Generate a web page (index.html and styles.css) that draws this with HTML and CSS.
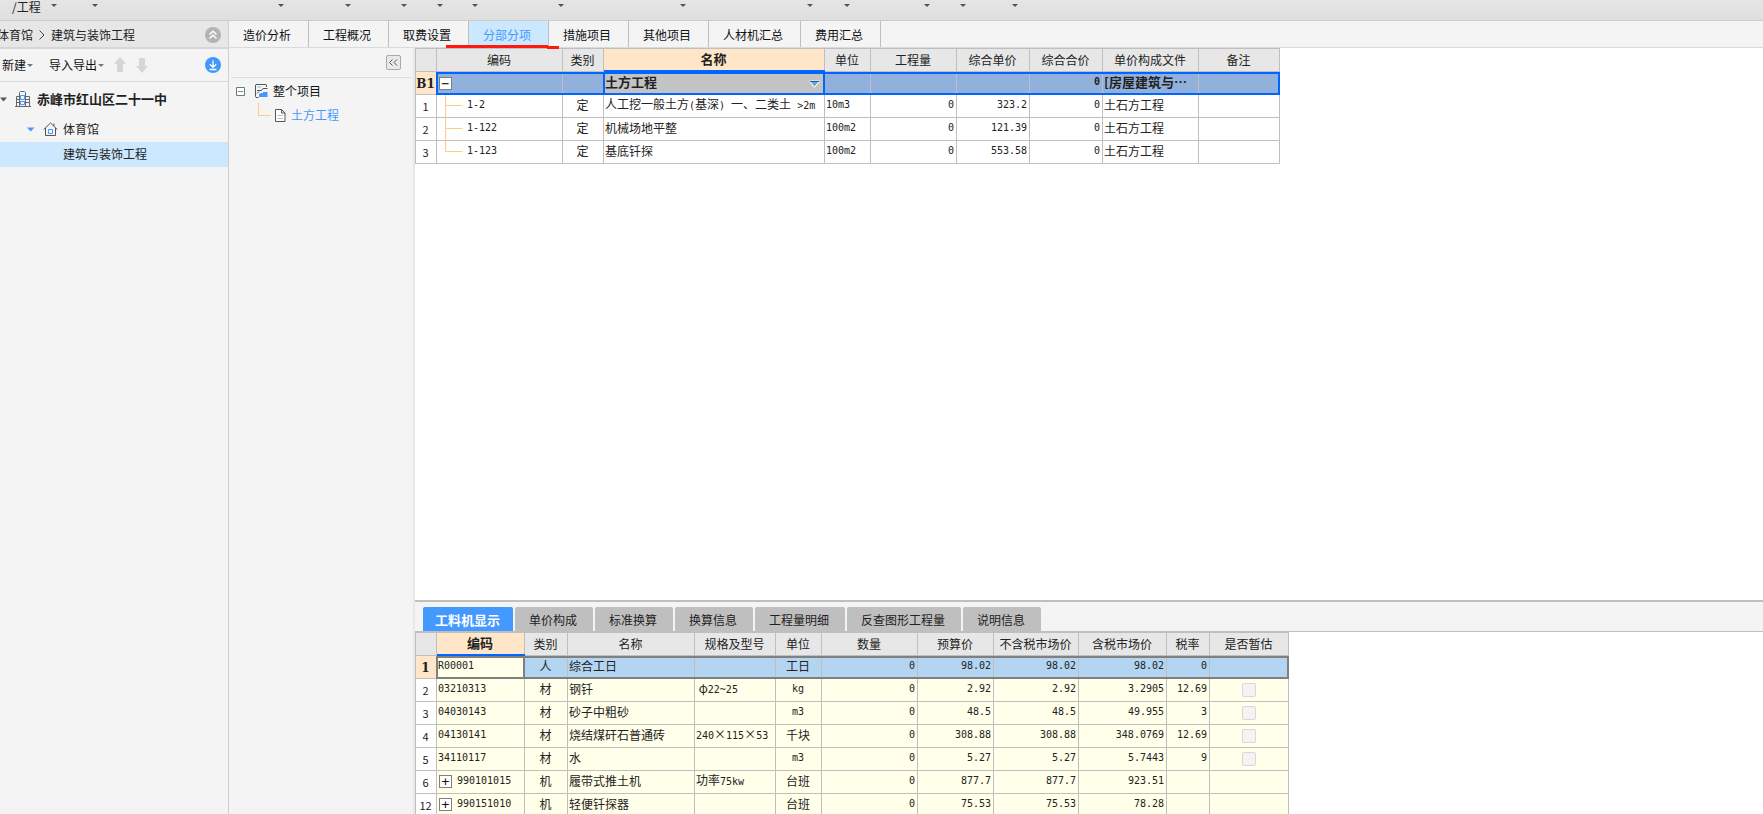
FILE: index.html
```html
<!DOCTYPE html>
<html lang="zh-CN">
<head>
<meta charset="utf-8">
<title>建筑与装饰工程</title>
<link rel="stylesheet" href="styles.css">
</head>
<body>
<header class="ribbon">
  <span class="ribbon-label">/工程</span>
  <i class="caret" style="left:51px"></i><i class="caret" style="left:92px"></i><i class="caret" style="left:278px"></i><i class="caret" style="left:345px"></i><i class="caret" style="left:401px"></i><i class="caret" style="left:437px"></i><i class="caret" style="left:472px"></i><i class="caret" style="left:558px"></i><i class="caret" style="left:680px"></i><i class="caret" style="left:807px"></i><i class="caret" style="left:844px"></i><i class="caret" style="left:924px"></i><i class="caret" style="left:960px"></i><i class="caret" style="left:1012px"></i>
</header>
<div class="app">
  <aside class="sidebar">
    <div class="crumbs">
      <span>体育馆</span>
      <svg width="6" height="10" viewBox="0 0 6 10"><path d="M0.500 0.500L5 5L0.500 9.500" fill="none" stroke="#444"/></svg>
      <span>建筑与装饰工程</span>
      <button class="round push" aria-label="收起"><svg width="16" height="16" viewBox="0 0 16 16"><circle cx="8" cy="8" r="8" fill="#b3b3b3"/><path d="M4.5 7.5L8 4.2L11.5 7.5M4.5 11.5L8 8.2L11.5 11.5" fill="none" stroke="#fff" stroke-width="1.4"/></svg></button>
    </div>
    <div class="toolbar">
      <button class="tool">新建<i class="caret-s"></i></button>
      <button class="tool export">导入导出<i class="caret-s"></i></button>
      <button class="arrow" aria-label="上移"><svg width="12" height="16" viewBox="0 0 12 16"><path d="M6 0L12 7H9V15H3V7H0Z" fill="#d6d6d6"/></svg></button>
      <button class="arrow" aria-label="下移"><svg width="12" height="16" viewBox="0 0 12 16"><path d="M6 16L12 9H9V1H3V9H0Z" fill="#d6d6d6"/></svg></button>
      <button class="round push" aria-label="下载"><svg width="16" height="16" viewBox="0 0 16 16"><circle cx="8" cy="8" r="8" fill="#4298fb"/><path d="M8 3.5V10M4.8 7.2L8 10.3L11.2 7.2M4.5 12.5H11.5" fill="none" stroke="#fff" stroke-width="1.3"/></svg></button>
    </div>
    <ul class="tree">
      <li class="root"><svg width="8" height="5" viewBox="0 0 8 5"><path d="M0 0.5H7L3.5 4.5Z" fill="#555"/></svg>
        <svg class="building" width="16" height="16" viewBox="0 0 16 16"><path d="M0 15.5H16M4.5 15V1.5L5.5 0.5H9.5L10.5 1.5V15M4.5 5.5H1.5V15M10.5 5.5H14.5V15M2 8.5H4M2 11.5H4M11 8.5H14M11 11.5H14" fill="none" stroke="#666"/><path d="M5.500 4.500H9.500V8.500H5.500ZM5.500 10.500H9.500V13.500H5.500Z" fill="none" stroke="#4499ff"/></svg>
        <span>赤峰市红山区二十一中</span></li>
      <li class="house"><svg width="8" height="5" viewBox="0 0 8 5"><path d="M0 0.5H7.5L3.7 4.5Z" fill="#4499ff"/></svg>
        <svg class="home" width="15" height="14" viewBox="0 0 15 14"><path d="M0.7 7.5L7.5 1L14.3 7.5M2.5 6V13.5H12.500V6M11 4V1.5" fill="none" stroke="#555"/><path d="M5.500 7.500H9.500V11.500H5.500Z" fill="none" stroke="#4499ff"/></svg>
        <span>体育馆</span></li>
      <li class="leaf">建筑与装饰工程</li>
    </ul>
  </aside>
  <main class="work">
    <nav class="tabs">
      <button>造价分析</button><button>工程概况</button><button>取费设置</button><button class="on">分部分项<svg class="mark" width="113" height="4" viewBox="0 0 113 4"><path d="M0 0H102V1H113V4H101V3H0Z" fill="#ff1a10"/></svg></button><button>措施项目</button><button>其他项目</button><button>人材机汇总</button><button>费用汇总</button>
    </nav>
    <div class="panes">
      <section class="outline">
        <div class="outline-head"><button class="fold" aria-label="收起面板"><svg width="9" height="7" viewBox="0 0 9 7"><path d="M3.500 0.500L0.500 3.500L3.500 6.500M8 0.500L5 3.500L8 6.500" fill="none" stroke="#555"/></svg></button></div>
        <ul class="outline-tree">
          <li><svg width="9" height="9" viewBox="0 0 9 9"><path d="M0.5 0.5H8.5V8.5H0.5Z" fill="#fff" stroke="#777"/><path d="M2 4.5H7" stroke="#2aa5dc"/></svg>
            <svg class="project" width="13" height="14" viewBox="0 0 13 14"><path d="M2 2H6V4H2Z" fill="#b9dcff"/><path d="M11.500 3V1L11 0.500H1L0.500 1V12.500L1 13.500H3.500" fill="none" stroke="#555"/><path d="M2 6.500H6.500L8 4.500H12.500M2 9.500L4 7.500" fill="none" stroke="#555"/><path d="M4 13V10L6 9H8V8H12.500V13Z" fill="#4499ff"/></svg>
            <span>整个项目</span></li>
          <li class="child"><svg class="elbow" width="14" height="13" viewBox="0 0 14 13"><path d="M0.5 0V12.5H13" fill="none" stroke="#ffcc80"/></svg>
            <svg class="doc" width="11" height="13" viewBox="0 0 11 13"><path d="M0.5 0.5H6.5L10 4V12.5H0.5ZM6.5 0.5V4H10" fill="#fff" stroke="#555"/><path d="M2.5 6.5H8M2.5 9.5H8" stroke="#bbb"/></svg>
            <span>土方工程</span></li>
        </ul>
      </section>
      <div class="grids">
        <section class="upper">
          <table class="grid bill">
            <colgroup><col class="w21"><col class="w126"><col class="w41"><col class="w221"><col class="w46"><col class="w86"><col class="w73"><col class="w73"><col class="w96"><col class="w81"></colgroup>
            <thead><tr><th></th><th>编码</th><th>类别</th><th class="cur">名称</th><th>单位</th><th>工程量</th><th>综合单价</th><th>综合合价</th><th>单价构成文件</th><th>备注</th></tr></thead>
            <tbody>
              <tr class="sel"><th class="cur serif">B1</th><td><button class="box" aria-label="折叠">−</button></td><td></td><td class="focus">土方工程<button class="drop" aria-label="选择"><svg width="11" height="8" viewBox="0 0 11 8"><path d="M0.500 0.500H10.500V2L6 7.500H5L0.500 2Z" fill="#eef8ff"/><path d="M2 2H9L5.500 6.500Z" fill="#5aa9d8"/><path d="M1 1.500H10" stroke="#245f91"/></svg></button></td><td></td><td></td><td></td><td class="r n">0</td><td>[房屋建筑与⋯</td><td></td></tr>
              <tr><th>1</th><td class="n branch">1-2</td><td class="c">定</td><td>人工挖一般土方<span class="n">(</span>基深<span class="n">)&nbsp;</span>一、二类土<span class="n">&nbsp;&gt;2m</span></td><td class="n">10m3</td><td class="r n">0</td><td class="r n">323.2</td><td class="r n">0</td><td>土石方工程</td><td></td></tr>
              <tr><th>2</th><td class="n branch">1-122</td><td class="c">定</td><td>机械场地平整</td><td class="n">100m2</td><td class="r n">0</td><td class="r n">121.39</td><td class="r n">0</td><td>土石方工程</td><td></td></tr>
              <tr><th>3</th><td class="n branch last">1-123</td><td class="c">定</td><td>基底钎探</td><td class="n">100m2</td><td class="r n">0</td><td class="r n">553.58</td><td class="r n">0</td><td>土石方工程</td><td></td></tr>
            </tbody>
          </table>
        </section>
        <section class="lower">
          <nav class="subtabs"><button class="on">工料机显示</button><button>单价构成</button><button>标准换算</button><button>换算信息</button><button>工程量明细</button><button>反查图形工程量</button><button>说明信息</button></nav>
          <table class="grid res">
            <colgroup><col class="w21"><col class="w88"><col class="w43"><col class="w127"><col class="w81"><col class="w46"><col class="w96"><col class="w76"><col class="w85"><col class="w88"><col class="w43"><col class="w79"></colgroup>
            <thead><tr><th></th><th class="cur">编码</th><th>类别</th><th>名称</th><th>规格及型号</th><th>单位</th><th>数量</th><th>预算价</th><th>不含税市场价</th><th>含税市场价</th><th>税率</th><th>是否暂估</th></tr></thead>
            <tbody>
              <tr class="sel"><th class="cur serif">1</th><td class="n focus">R00001</td><td class="c">人</td><td>综合工日</td><td></td><td class="c">工日</td><td class="r n">0</td><td class="r n">98.02</td><td class="r n">98.02</td><td class="r n">98.02</td><td class="r n">0</td><td></td></tr>
              <tr><th>2</th><td class="n">03210313</td><td class="c">材</td><td>钢钎</td><td>&nbsp;φ<span class="n">22~25</span></td><td class="c n">kg</td><td class="r n">0</td><td class="r n">2.92</td><td class="r n">2.92</td><td class="r n">3.2905</td><td class="r n">12.69</td><td class="c"><input type="checkbox" disabled aria-label="是否暂估"></td></tr>
              <tr><th>3</th><td class="n">04030143</td><td class="c">材</td><td>砂子中粗砂</td><td></td><td class="c n">m3</td><td class="r n">0</td><td class="r n">48.5</td><td class="r n">48.5</td><td class="r n">49.955</td><td class="r n">3</td><td class="c"><input type="checkbox" disabled aria-label="是否暂估"></td></tr>
              <tr><th>4</th><td class="n">04130141</td><td class="c">材</td><td>烧结煤矸石普通砖</td><td><span class="n">240</span><span class="times">×</span><span class="n">115</span><span class="times">×</span><span class="n">53</span></td><td class="c">千块</td><td class="r n">0</td><td class="r n">308.88</td><td class="r n">308.88</td><td class="r n">348.0769</td><td class="r n">12.69</td><td class="c"><input type="checkbox" disabled aria-label="是否暂估"></td></tr>
              <tr><th>5</th><td class="n">34110117</td><td class="c">材</td><td>水</td><td></td><td class="c n">m3</td><td class="r n">0</td><td class="r n">5.27</td><td class="r n">5.27</td><td class="r n">5.7443</td><td class="r n">9</td><td class="c"><input type="checkbox" disabled aria-label="是否暂估"></td></tr>
              <tr><th>6</th><td class="n"><button class="box" aria-label="展开">+</button>990101015</td><td class="c">机</td><td>履带式推土机</td><td>功率<span class="n">75kw</span></td><td class="c">台班</td><td class="r n">0</td><td class="r n">877.7</td><td class="r n">877.7</td><td class="r n">923.51</td><td></td><td></td></tr>
              <tr><th>12</th><td class="n"><button class="box" aria-label="展开">+</button>990151010</td><td class="c">机</td><td>轻便钎探器</td><td></td><td class="c">台班</td><td class="r n">0</td><td class="r n">75.53</td><td class="r n">75.53</td><td class="r n">78.28</td><td></td><td></td></tr>
            </tbody>
          </table>
        </section>
      </div>
    </div>
  </main>
</div>
</body>
</html>
```
FILE: styles.css
```css
* { box-sizing: border-box; }
body {
  margin: 0;
  height: 100vh;
  overflow: hidden;
  display: flex;
  flex-direction: column;
  font: 12px/16px "Noto Sans CJK SC", sans-serif;
  color: #222;
  background: #f4f4f4;
}
button { font: inherit; color: inherit; margin: 0; padding: 0; border: 0; background: none; }
svg { display: block; flex: none; }
ul { list-style: none; margin: 0; padding: 0; }

.ribbon {
  position: relative;
  flex: none;
  height: 21px;
  padding-left: 12px;
  line-height: 13px;
  background: linear-gradient(#e5e5e5, #dfdfdf);
  border-bottom: 1px solid #ccc;
}
.caret { position: absolute; top: 4px; border: 3px solid transparent; border-top-color: #555; border-bottom: 0; }

.app { flex: 1; min-height: 0; display: flex; }
.sidebar { flex: none; width: 229px; border-right: 1px solid #d0d0d0; }
.crumbs {
  display: flex;
  align-items: center;
  gap: 6px;
  height: 28px;
  margin-left: -3px;
  padding: 2px 7px 0 0;
  background: #e7e7e7;
  border-bottom: 2px solid #d6d6d6;
}
.push { margin-left: auto; }
.toolbar {
  display: flex;
  align-items: center;
  height: 33px;
  padding: 0 7px 0 2px;
  border-bottom: 1px solid #d6d6d6;
}
.tool { display: flex; align-items: center; gap: 1px; color: #111; }
.export { margin-left: 16px; }
.caret-s { border: 3px solid transparent; border-top-color: #777; border-bottom: 0; }
.arrow { margin-left: 10px; }
.tree li { display: flex; align-items: center; height: 25px; padding-bottom: 1px; }
.tree .root { height: 35px; font-size: 13px; font-weight: bold; }
.building { margin: 0 6px 0 7px; }
.tree .house { padding-left: 27px; }
.home { margin: 0 5px 0 8px; }
.tree .leaf { padding-left: 63px; background: #cce8ff; }

.work { flex: 1; min-width: 0; display: flex; flex-direction: column; }
.tabs { flex: none; display: flex; height: 27px; border-bottom: 1px solid #dadada; }
.tabs button { position: relative; padding: 2px 17px 0 14px; border-right: 1px solid #bfbfbf; color: #111; }
.tabs .on { background: #cce8ff; color: #4499ff; }
.mark { position: absolute; z-index: 1; left: -23px; bottom: -2px; }

.panes { flex: 1; min-height: 0; display: flex; }
.outline { flex: none; width: 186px; border-right: 2px solid #e8e8e8; }
.outline-head { display: flex; justify-content: flex-end; align-items: center; height: 30px; margin: 0 2px; padding: 0 10px 0 0; border-bottom: 1px solid #dcdcdc; }
.fold { width: 15px; height: 15px; border: 1px solid #aaa; border-radius: 2px; background: #e9e9e9; display: grid; place-items: center; }
.outline-tree { padding: 1px 0 0 7px; }
.outline-tree li { display: flex; align-items: center; height: 24px; color: #111; }
.project { margin: 0 5px 0 10px; }
.outline-tree .child { padding-left: 22px; color: #4499ff; }
.elbow { align-self: flex-start; }
.doc { margin: 0 5px 0 3px; }

.grids { flex: 1; min-width: 0; display: flex; flex-direction: column; background: #fff; }
.upper { flex: 1; min-height: 0; overflow: hidden; }
.lower { flex: none; height: 214px; overflow: hidden; border-top: 2px solid #bfbfbf; }
.subtabs { display: flex; align-items: stretch; gap: 2px; height: 30px; padding: 5px 8px 0; background: #f4f4f4; border-bottom: 1px solid #bfbfbf; }
.subtabs button { padding: 2px 16px 0 14px; background: #bfbfbf; border-radius: 2px 2px 0 0; }
.subtabs .on { padding: 2px 13px 0 12px; background: #4499ff; color: #fff; font-size: 13px; font-weight: bold; }

.grid { table-layout: fixed; width: 0; border-collapse: separate; border-spacing: 0; border: solid #bfbfbf; border-width: 1px 0 0 1px; }
.grid th, .grid td { position: relative; height: 23px; padding: 0 2px 2px 1px; border: solid #bfbfbf; border-width: 0 1px 1px 0; white-space: nowrap; text-align: left; font-weight: normal; line-height: 16px; }
.grid th { padding: 0 1px 0 0; text-align: center; }
.grid thead th { background: #e7e7e7; }
.grid tbody th { background: #fff; font-size: 11px; }
.grid .cur { background: #ffe6c8; font-size: 13px; font-weight: bold; }
.grid thead .cur { padding-bottom: 2px; }
.grid .serif { padding-top: 2px; font: bold 12px/16px "DejaVu Serif", serif; }
.grid thead .cur::after { content: ""; position: absolute; z-index: 1; left: 0; right: -1px; bottom: -1px; height: 2px; background: #06f; }
.grid .r { text-align: right; padding-right: 2px; }
.grid .c { text-align: center; }
.grid .n { font-family: "DejaVu Sans Mono", monospace; font-size: 10px; }
.times { display: inline-block; width: 12px; text-align: center; }
.sel { position: relative; }
.sel::after { content: ""; position: absolute; pointer-events: none; left: 20px; right: 0; top: 0; bottom: 0; border: 2px solid #06f; }
.bill .sel td { background: #91b1dc; font-weight: bold; font-size: 13px; }
.bill .sel .n { font-size: 10px; }
.bill .sel .focus { background: #c3c3c3; }
.bill .focus::after { content: ""; position: absolute; top: 0; bottom: 0; left: -1px; right: -1px; border: solid #06f; border-width: 0 2px; }
.drop { position: absolute; right: 4px; top: 8px; }
.box { display: inline-grid; place-items: center; vertical-align: middle; width: 13px; height: 13px; margin: 0 5px 0 1px; border: 1px solid #808080; background: #fff; color: #111; font: 13px/11px "DejaVu Sans Mono", monospace; }
.grid .branch { padding-left: 30px; }
.branch::before { content: ""; position: absolute; left: 8px; top: 0; width: 1px; height: 23px; background: #ffcc80; }
.branch::after { content: ""; position: absolute; left: 8px; top: 10px; width: 17px; height: 1px; background: #ffcc80; }
.last::before { height: 11px; }
.res td { background: #ffffea; }
.res .sel td { background: #b3d5f2; }
.res .sel .focus { background: #ffffea; }
.res .sel::after { border-color: #808080; }
.res .focus::after { content: ""; position: absolute; inset: 0 -1px -1px -1px; border: 2px solid #808080; border-left-color: #06f; }
input { appearance: none; display: block; width: 14px; height: 14px; margin: 2px auto 0; border: 1px solid #d8d8d8; border-radius: 2px; background: #f3f3f3; }

.w21 { width: 21px; } .w41 { width: 41px; } .w43 { width: 43px; } .w46 { width: 46px; }
.w73 { width: 73px; } .w76 { width: 76px; } .w79 { width: 79px; } .w81 { width: 81px; }
.w85 { width: 85px; } .w86 { width: 86px; } .w88 { width: 88px; } .w96 { width: 96px; }
.w126 { width: 126px; } .w127 { width: 127px; } .w221 { width: 221px; }
```
